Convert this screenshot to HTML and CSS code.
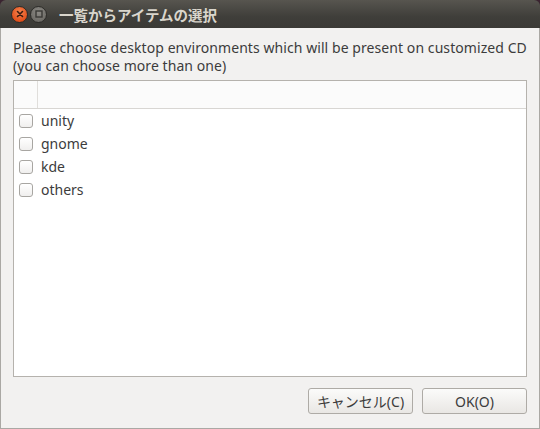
FILE: index.html
```html
<!DOCTYPE html>
<html lang="ja">
<head>
<meta charset="utf-8">
<title>一覧からアイテムの選択</title>
<link rel="stylesheet" href="styles.css">
</head>
<body>
<div class="window">
  <div class="titlebar">
    <div class="wbtn close">
      <svg width="8" height="8" viewBox="0 0 8 8"><path d="M1.5 1.5 L6.5 6.5 M6.5 1.5 L1.5 6.5" stroke="#3a1b10" stroke-width="1.6" stroke-linecap="round"/></svg>
    </div>
    <div class="wbtn max">
      <svg width="8" height="8" viewBox="0 0 8 8"><rect x="1" y="1" width="6" height="6" fill="none" stroke="#3b3a37" stroke-width="1.4"/></svg>
    </div>
    <div class="title">一覧からアイテムの選択</div>
  </div>
  <div class="content">
    <p class="label">Please choose desktop environments which will be present on customized CD<br>(you can choose more than one)</p>
    <div class="listbox">
      <div class="header">
        <div class="hcol first"></div>
        <div class="hcol"></div>
      </div>
      <div class="row"><span class="check"></span><span class="item">unity</span></div>
      <div class="row"><span class="check"></span><span class="item">gnome</span></div>
      <div class="row"><span class="check"></span><span class="item">kde</span></div>
      <div class="row"><span class="check"></span><span class="item">others</span></div>
    </div>
    <div class="actions">
      <button class="btn">キャンセル(C)</button>
      <button class="btn">OK(O)</button>
    </div>
  </div>
</div>
</body>
</html>
```
FILE: styles.css
```css
html, body {
  margin: 0;
  padding: 0;
}
body {
  background: #3a2430;
  width: 540px;
  height: 429px;
  overflow: hidden;
  font-family: "Noto Sans", "Noto Sans CJK JP", sans-serif;
}
.window {
  width: 540px;
  height: 429px;
  border-radius: 6px 6px 0 0;
  overflow: hidden;
  display: flex;
  flex-direction: column;
}
.titlebar {
  height: 28px;
  flex: none;
  background: linear-gradient(#57554f, #3f3e3a 60%, #3b3a36);
  display: flex;
  align-items: center;
  padding-left: 11px;
  box-sizing: border-box;
}
.wbtn {
  width: 17px;
  height: 17px;
  border-radius: 50%;
  display: flex;
  align-items: center;
  justify-content: center;
  box-sizing: border-box;
}
.close {
  background: radial-gradient(circle at 50% 35%, #f5844f, #e2511d 70%, #c9400f);
  border: 1px solid #2e2d2a;
}
.max {
  margin-left: 2px;
  background: radial-gradient(circle at 50% 35%, #8c8a85, #6f6d68 70%, #5e5c58);
  border: 1px solid #2e2d2a;
}
.title {
  margin-left: 12px;
  color: #d9d5cc;
  font-weight: bold;
  font-size: 14.5px;
  font-family: "Noto Sans CJK JP", sans-serif;
}
.content {
  flex: 1;
  background: #f2f1f0;
  border: 1px solid #aaa8a4;
  border-top: none;
  padding: 11px 12px 0 12px;
  display: flex;
  flex-direction: column;
}
.label {
  margin: 0;
  font-size: 14px;
  line-height: 18px;
  letter-spacing: 0.07px;
  color: #3c3c3c;
}
.listbox {
  margin-top: 5px;
  height: 297px;
  box-sizing: border-box;
  border: 1px solid #b5b2ad;
  background: #ffffff;
}
.header {
  height: 28px;
  box-sizing: border-box;
  border-bottom: 1px solid #d8d6d3;
  background: #fbfbfb;
  display: flex;
}
.hcol.first {
  width: 23px;
  border-right: 1px solid #e0dedb;
}
.row {
  height: 23px;
  display: flex;
  align-items: center;
  padding-left: 5px;
}
.check {
  width: 14px;
  height: 14px;
  box-sizing: border-box;
  border: 1px solid #a8a6a2;
  border-radius: 3px;
  background: linear-gradient(#ffffff, #f0efee);
}
.item {
  margin-left: 8px;
  font-size: 14px;
  color: #3c3c3c;
}
.actions {
  margin-top: 11px;
  display: flex;
  justify-content: flex-end;
  gap: 9px;
}
.btn {
  width: 105px;
  height: 26px;
  box-sizing: border-box;
  border: 1px solid #aeaba6;
  border-radius: 3px;
  background: linear-gradient(#fbfbfa, #e9e7e4);
  font-family: "Noto Sans", "Noto Sans CJK JP", sans-serif;
  font-size: 14px;
  color: #3c3c3c;
  padding: 0;
}
```
